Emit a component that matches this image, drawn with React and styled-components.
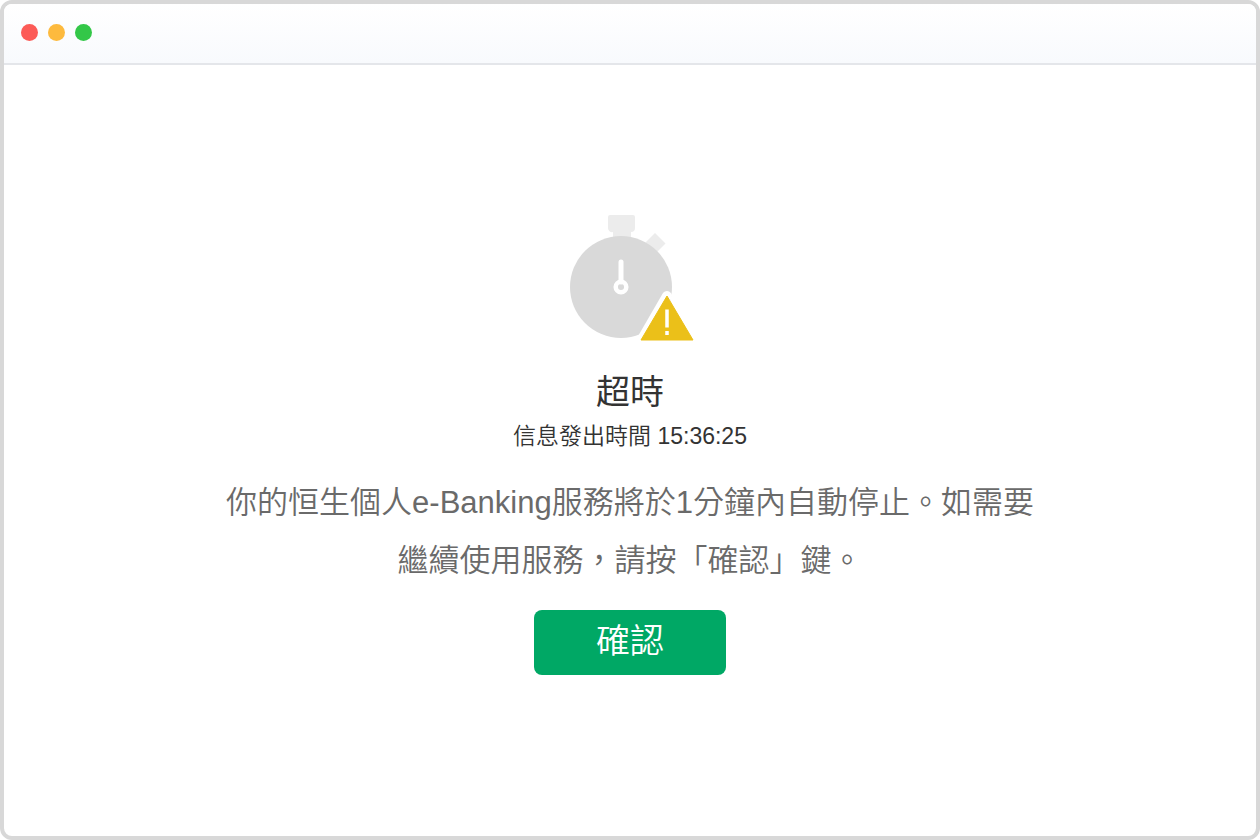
import React from 'react';
import styled, { createGlobalStyle } from 'styled-components';

const GlobalStyle = createGlobalStyle`
  *{
    box-sizing: border-box;
  }
  body{
    margin: 0;
    background: #FFFFFF;
    font-family: "Liberation Sans", "Noto Sans CJK TC", sans-serif;
  }
`
const Window = styled.div`
  display: flex;
  flex-direction: column;
  min-height: 100vh;
  border: 4px solid #D8D8D8;
  border-radius: 12px;
  background: #FFFFFF;
`
const TitleBar = styled.header`
  display: flex;
  align-items: center;
  gap: 10px;
  height: 61px;
  padding: 0 17px 2px;
  border-bottom: 2px solid #E4E6EA;
  border-radius: 8px 8px 0 0;
  background: linear-gradient(#FFFFFF, #F8FAFD);
`
const Dot = styled.span`
  width: 17px;
  height: 17px;
  border-radius: 50%;
  background: ${(props) => props.$color};
`
const Content = styled.main`
  display: flex;
  flex-direction: column;
  align-items: center;
  padding: 149px 24px 48px;
  text-align: center;
`
const Heading = styled.h1`
  margin: 24px 0 0;
  font-size: 34px;
  font-weight: 400;
  line-height: 52px;
  color: #333333;
`
const Time = styled.p`
  margin: 0;
  font-size: 23px;
  font-weight: 350;
  line-height: 36px;
  color: #333333;
`
const Message = styled.p`
  max-width: 820px;
  margin: 20px 0;
  font-size: 31px;
  font-weight: 350;
  line-height: 58px;
  color: #6A6A6A;
`
const ButtonOk = styled.button`
  width: 192px;
  height: 65px;
  padding: 0 0 4px;
  border: 0;
  border-radius: 8px;
  background: #00A865;
  font-family: inherit;
  font-size: 34px;
  font-weight: 350;
  line-height: 60px;
  color: #FFFFFF;
  cursor: pointer;
`
const TimeoutIcon = () => (
  <svg width="130" height="128" viewBox="-4 0 130 128" aria-hidden="true">
    <path d="M41 1h23a2 2 0 0 1 2 2v11a4 4 0 0 1-4 4v6H44v-6a4 4 0 0 1-5-4V3a2 2 0 0 1 2-2z" fill="#ECECEC" />
    <path d="M86 19l10.500 10.500-9 9-12-9z" fill="#ECECEC" />
    <circle cx="52" cy="73" r="51" fill="#D9D9D9" />
    <path d="M52 48v20" stroke="#FFFFFF" strokeWidth="5" strokeLinecap="round" />
    <circle cx="52" cy="73" r="5.300" fill="none" stroke="#FFFFFF" strokeWidth="4.500" />
    <path d="M98 82L72 127" stroke="#FFFFFF" strokeWidth="10" strokeLinecap="round" />
    <path d="M98 82L124 126H72z" fill="#EBC019" stroke="#EBC019" strokeWidth="1" strokeLinejoin="round" />
    <path d="M98 95.500v18M98 117v4" stroke="#FFFFFF" strokeWidth="3.500" />
  </svg>
)
export default class App extends React.PureComponent{
  render(){
    return (
      <>
        <GlobalStyle />
        <Window>
          <TitleBar>
            <Dot $color="#FC5B57" />
            <Dot $color="#FDBA3E" />
            <Dot $color="#33C748" />
          </TitleBar>
          <Content>
            <TimeoutIcon />
            <Heading>超時</Heading>
            <Time>信息發出時間 15:36:25</Time>
            <Message>你的恒生個人e-Banking服務將於1分鐘內自動停止。如需要繼續使用服務，請按「確認」鍵。</Message>
            <ButtonOk type="button">確認</ButtonOk>
          </Content>
        </Window>
      </>
    )
  }
}
